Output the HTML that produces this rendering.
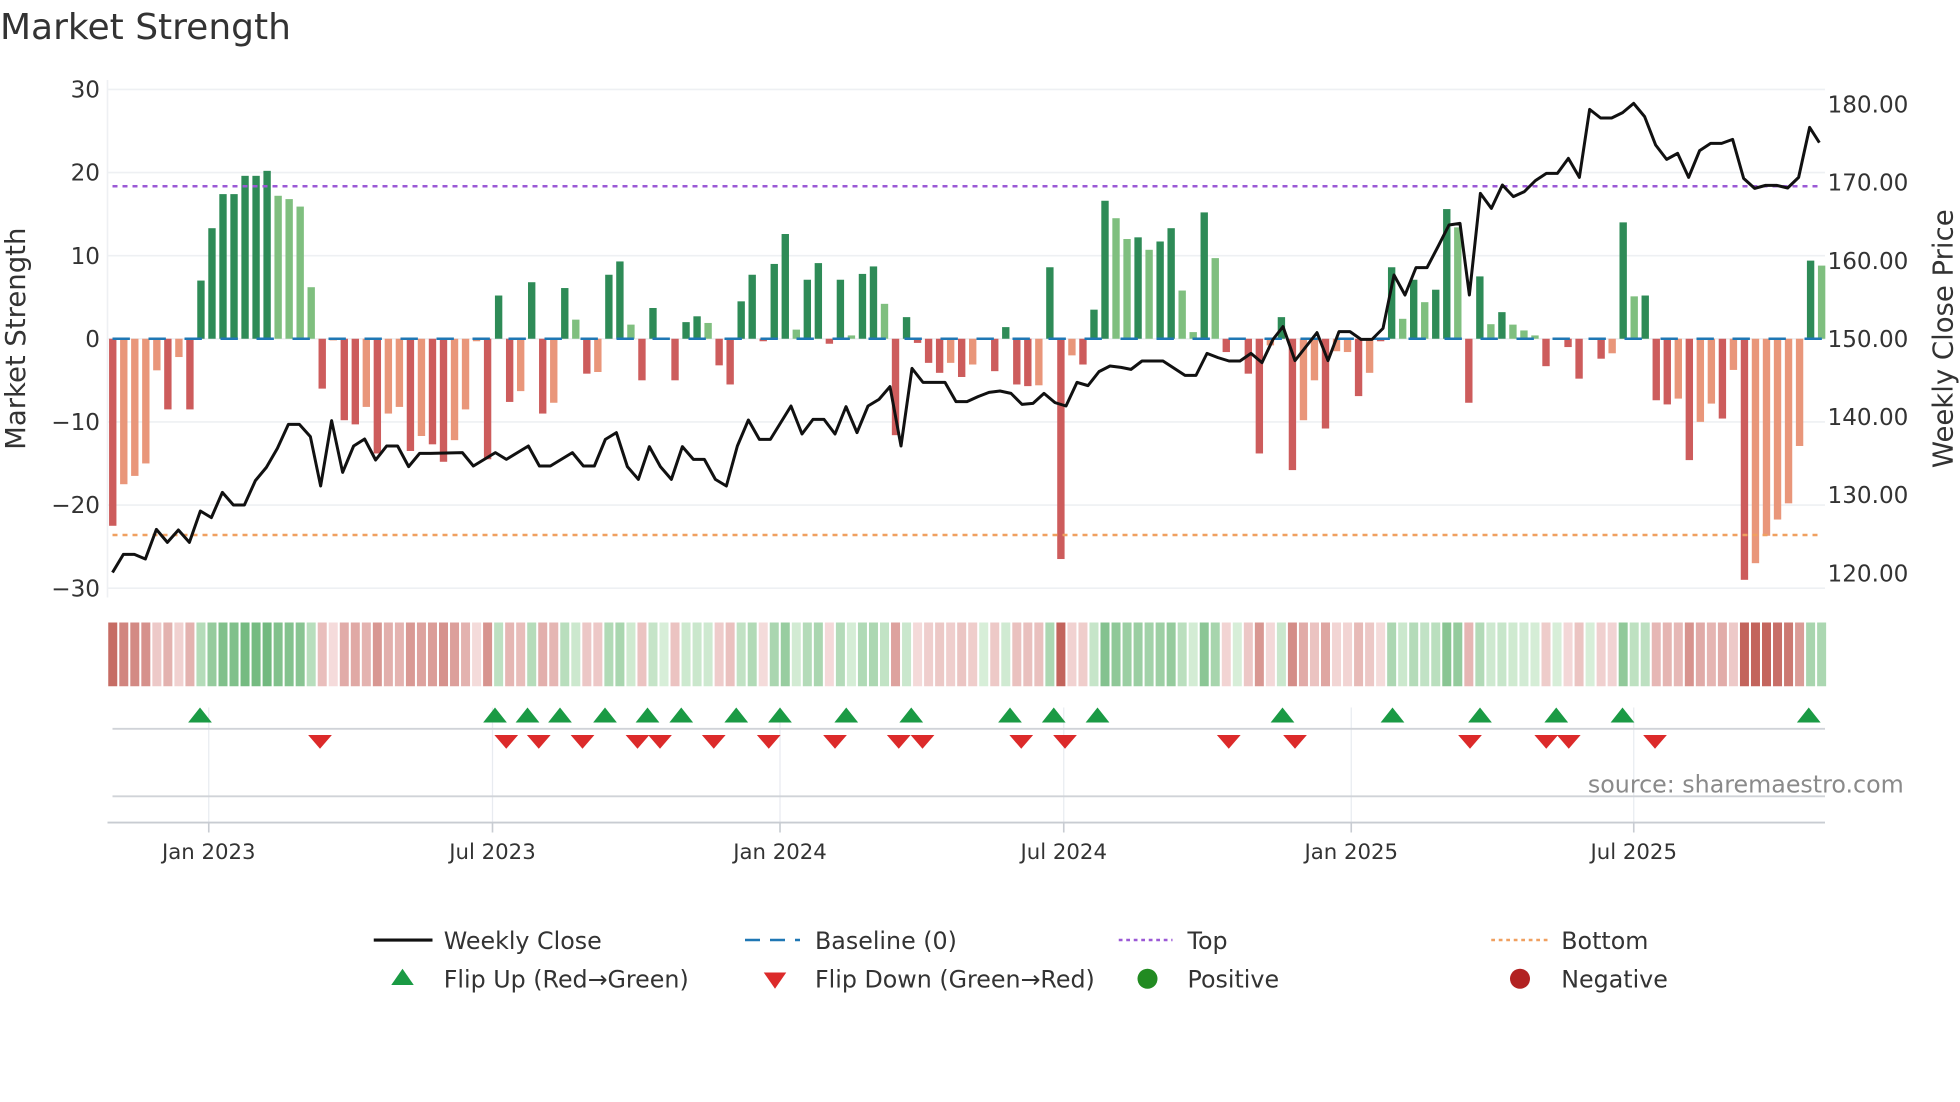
<!DOCTYPE html>
<html><head><meta charset="utf-8">
<style>
html,body{margin:0;padding:0;background:#fff;width:1960px;height:1102px;overflow:hidden}
svg{display:block}
text{font-family:"DejaVu Sans","Liberation Sans",sans-serif;fill:#333}
</style></head>
<body>
<svg id="s" width="1960" height="1102" viewBox="0 0 1568 881.6" xmlns="http://www.w3.org/2000/svg">
<rect width="1568" height="882" fill="#fff"/>
<text x="0" y="31" font-size="28.8">Market Strength</text>
<g id="grid"></g>
<g id="bars"></g>
<g id="heat"></g>
<g id="marks"></g>
<g font-size="18.5" id="labels"></g>
<text transform="translate(20,271) rotate(-90)" font-size="22" text-anchor="middle">Market Strength</text>
<text transform="translate(1562,271) rotate(-90)" font-size="22" text-anchor="middle">Weekly Close Price</text>
<text x="1523" y="634" font-size="19" style="fill:#8a8a8a" text-anchor="end">source: sharemaestro.com</text>
<g font-size="19">
<line x1="299" y1="752" x2="346" y2="752" stroke="#111" stroke-width="2.5"/>
<text x="355" y="759">Weekly Close</text>
<line x1="596" y1="752" x2="640" y2="752" stroke="#1f77b4" stroke-width="2" stroke-dasharray="12,8"/>
<text x="652" y="759">Baseline (0)</text>
<line x1="895" y1="752" x2="938" y2="752" stroke="#9b59d6" stroke-width="2" stroke-dasharray="3,3"/>
<text x="950" y="759">Top</text>
<line x1="1193" y1="752" x2="1238" y2="752" stroke="#f0a060" stroke-width="2" stroke-dasharray="3,3"/>
<text x="1249" y="759">Bottom</text>
<polygon points="322,775 313,788 331,788" fill="#1a9a44"/>
<text x="355" y="790">Flip Up (Red→Green)</text>
<polygon points="620,791 611,778 629,778" fill="#dc2a2a"/>
<text x="652" y="790">Flip Down (Green→Red)</text>
<circle cx="918" cy="783" r="8" fill="#228b22"/>
<text x="950" y="790">Positive</text>
<circle cx="1216" cy="783" r="8" fill="#b22222"/>
<text x="1249" y="790">Negative</text>
</g>
</svg>
<script>
var NS="http://www.w3.org/2000/svg";
function el(p,t,a){var e=document.createElementNS(NS,t);for(var k in a)e.setAttribute(k,a[k]);p.appendChild(e);return e;}
var grid=document.getElementById('grid'),bars=document.getElementById('bars'),heat=document.getElementById('heat'),marks=document.getElementById('marks'),labels=document.getElementById('labels');
var Z=271,U=6.65;
[30,20,10,0,-10,-20,-30].forEach(function(v){var y=Z-v*U;el(grid,'line',{x1:86,x2:1460,y1:y,y2:y,stroke:'#eef0f3','stroke-width':1.3});
 var t=el(labels,'text',{x:80,y:y+6.5,'text-anchor':'end'});t.textContent=(v<0?'\u2212':'')+Math.abs(v);});
[180,170,160,150,140,130,120].forEach(function(p){var y=271-(p-150)*6.25;var t=el(labels,'text',{x:1462,y:y+6.5});t.textContent=p.toFixed(2);});
el(grid,'line',{x1:86,x2:86,y1:64,y2:478,stroke:'#eef0f3','stroke-width':1.3});
var ticks=[[167,'Jan 2023'],[394,'Jul 2023'],[624,'Jan 2024'],[851,'Jul 2024'],[1081,'Jan 2025'],[1307,'Jul 2025']];
ticks.forEach(function(t){el(grid,'line',{x1:t[0],x2:t[0],y1:566,y2:658,stroke:'#e8ebf0','stroke-width':1});
 el(grid,'line',{x1:t[0],x2:t[0],y1:658,y2:666,stroke:'#c8ccd2','stroke-width':1.3});
 var tx=el(labels,'text',{x:t[0],y:687,'text-anchor':'middle','font-size':'17'});tx.textContent=t[1];});
el(grid,'line',{x1:90,x2:1460,y1:583,y2:583,stroke:'#d0d3d8','stroke-width':1.5});
el(grid,'line',{x1:90,x2:1460,y1:637,y2:637,stroke:'#d0d3d8','stroke-width':1.5});
el(grid,'line',{x1:86,x2:1460,y1:658,y2:658,stroke:'#c8ccd2','stroke-width':1.5});
var D="-22.5d -17.5l -16.5l -15l -3.8l -8.5d -2.2l -8.5d 7d 13.3d 17.4d 17.4d 19.6d 19.6d 20.2d 17.2l 16.8l 15.9l 6.2l -6d -0.2l -9.8d -10.3d -8.2l -13.8d -9l -8.2l -13.5d -11.7l -12.7d -14.8d -12.2l -8.5l -0.3l -14.5d 5.2d -7.6d -6.3l 6.8d -9d -7.7l 6.1d 2.3l -4.2d -4l 7.7d 9.3d 1.7l -5d 3.7d 0d -5d 2d 2.7d 1.9l -3.2d -5.5d 4.5d 7.7d -0.3d 9d 12.6d 1.1l 7.1d 9.1d -0.6d 7.1d 0.4l 7.8d 8.7d 4.2l -11.6d 2.6d -0.5d -2.9d -4.1d -2.9l -4.6d -3.1l 0d -3.9d 1.4d -5.5d -5.7d -5.6l 8.6d -26.5d -2l -3.1d 3.5d 16.6d 14.5l 12l 12.2d 10.7l 11.7d 13.3d 5.8l 0.8l 15.2d 9.7l -1.6d 0d -4.2d -13.8d -0.8l 2.6d -15.8d -9.8l -5l -10.8d -1.5l -1.6l -6.9d -4.1l -0.3d 8.6d 2.4l 7.1d 4.4l 5.9d 15.6d 13.4l -7.7d 7.5d 1.75l 3.2d 1.7l 1l 0.4l -3.3d 0d -1d -4.8d 0d -2.4d -1.75l 14d 5.1l 5.2d -7.4d -7.9d -7.2l -14.6d -10l -7.8l -9.6d -3.75l -29d -27l -23.7l -21.75l -19.8l -12.9l 9.4d 8.8l".split(' ');
var X0=90.2,SP=8.82,BW=5.9;
D.forEach(function(s,i){var v=parseFloat(s),d=s.slice(-1)=='d';var x=X0+i*SP;
 if(Math.abs(v)>0.05){var h=Math.abs(v)*U;var c=v>0?(d?'#2e8b57':'#7fbf7f'):(d?'#cd5c5c':'#e9967a');
  el(bars,'rect',{x:x-BW/2,y:v>0?Z-h:Z,width:BW,height:h,fill:c});}
 var a=Math.min(Math.abs(v)/24,1);var col;
 if(v>=0){var r=Math.round(215-(215-95)*a),g=Math.round(238-(238-175)*a),b=Math.round(216-(216-110)*a);col='rgb('+r+','+g+','+b+')';}
 else{var r2=Math.round(245-(245-195)*a),g2=Math.round(220-(220-100)*a),b2=Math.round(220-(220-92)*a);col='rgb('+r2+','+g2+','+b2+')';}
 el(heat,'rect',{x:x-3.6,y:498,width:7.2,height:51,fill:col});
});
el(bars,'line',{x1:90,x2:1458,y1:Z,y2:Z,stroke:'#1f77b4','stroke-width':2,'stroke-dasharray':'13.9,14.9'});
el(bars,'line',{x1:90,x2:1458,y1:149,y2:149,stroke:'#9b59d6','stroke-width':2,'stroke-dasharray':'4,4'});
el(bars,'line',{x1:90,x2:1458,y1:428,y2:428,stroke:'#f0a060','stroke-width':2,'stroke-dasharray':'4,4'});
var pts=[[90,458]];
function add(off,arr){arr.forEach(function(p){pts.push([off+p[0]/3.75,48+p[1]/3.75]);});}
add(68,[[115,1483],[148,1483],[181,1497],[214,1408],[247,1447],[280,1410],[313,1447],[346,1353],[379,1373],[412,1297],[445,1335],[478,1335],[511,1262],[544,1222],[577,1165],[610,1093],[643,1093],[676,1130],[707,1278],[740,1082],[773,1237],[806,1158],[839,1137],[872,1200],[905,1158],[938,1158],[971,1220],[1004,1180],[1037,1180]]);
add(344,[[97,1178],[130,1218],[196,1178],[229,1198],[295,1158],[328,1218],[361,1218],[427,1178],[460,1218],[493,1218],[526,1138],[559,1118],[592,1220],[625,1258],[658,1160],[691,1220],[724,1258],[757,1160],[790,1198],[823,1198],[856,1258],[889,1278],[922,1158],[955,1080],[988,1138],[1021,1138]]);
add(620,[[48,1038],[81,1122],[114,1078],[147,1078],[180,1122],[213,1040],[246,1118],[279,1038],[312,1018],[345,980],[378,1158],[411,925],[444,967],[477,967],[510,967],[543,1025],[576,1025],[609,1010],[642,997],[675,993],[708,1000],[741,1033],[774,1030],[807,1000],[840,1028],[873,1038],[906,967],[939,977],[972,935],[1005,918],[1038,922]]);
add(896,[[33,928],[66,903],[129,903],[195,946],[228,946],[261,880],[294,893],[327,903],[360,903],[393,880],[426,908],[459,838],[489,800],[525,902],[558,860],[591,818],[624,902],[657,815],[690,815],[723,838],[756,838],[789,805],[822,645],[855,705],[888,623],[921,623],[954,560],[987,495],[1020,490]]);
add(1168,[[28,705],[61,400],[94,445],[127,375],[160,410],[193,395],[226,362],[259,340],[292,340],[325,295],[358,352],[389,148],[422,174],[455,174],[488,158],[521,130],[554,170],[587,255],[620,298],[653,280],[686,352],[719,272],[752,250],[785,250],[818,238],[851,355],[884,385],[917,376],[950,376],[983,384],[1016,352],[1049,202],[1078,248]]);
el(bars,'polyline',{points:pts.map(function(p){return p[0].toFixed(1)+','+p[1].toFixed(1);}).join(' '),fill:'none',stroke:'#111','stroke-width':2.4,'stroke-linejoin':'round'});
[160,396,422,448,484,518,545,589,624,677,729,808,843,878,1026,1114,1184,1245,1298,1447].forEach(function(x){el(marks,'polygon',{points:(x)+',566 '+(x-9.5)+',578 '+(x+9.5)+',578',fill:'#1a9a44'});});
[256,405,431,466,510,528,571,615,668,719,738,817,852,983,1036,1176,1237,1255,1324].forEach(function(x){el(marks,'polygon',{points:(x-9.5)+',588 '+(x+9.5)+',588 '+x+',599',fill:'#dc2a2a'});});
</script>
</body></html>
